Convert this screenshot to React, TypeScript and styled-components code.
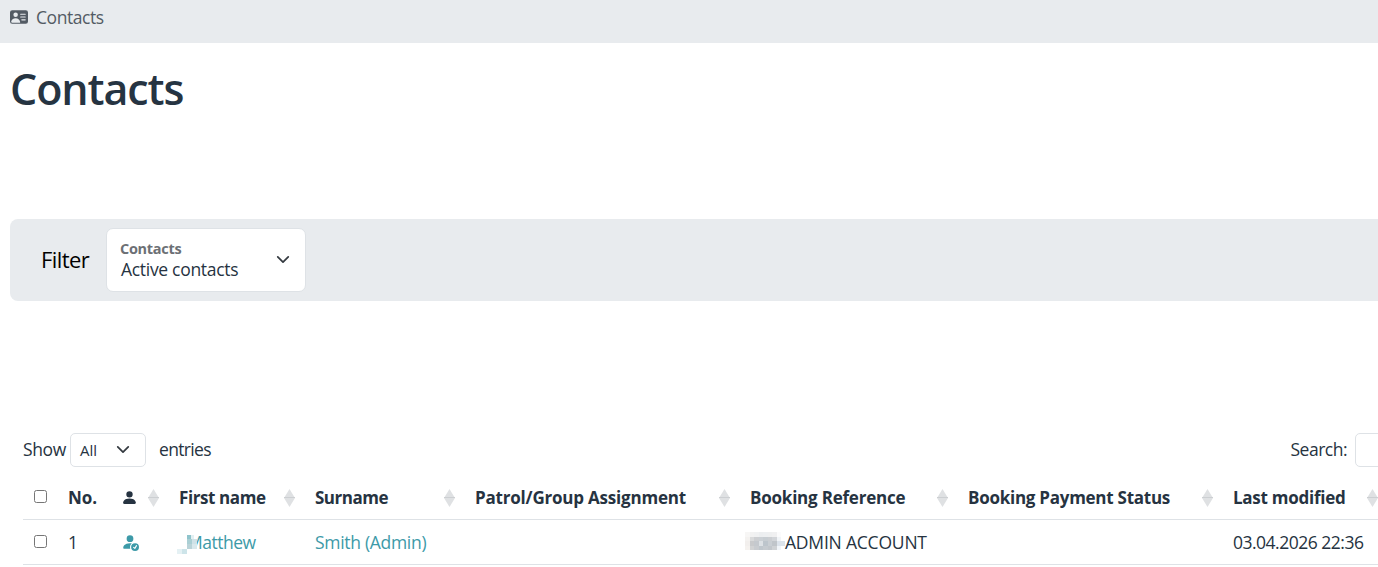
import { ReactNode } from "react";
import { BsPersonFill, BsPersonFillCheck, BsPersonVcardFill } from "react-icons/bs";
import styled, { createGlobalStyle } from "styled-components";

const columns = [
  { label: "First name", width: 136, tracking: -0.4 },
  { label: "Surname", width: 160, tracking: -0.5 },
  { label: "Patrol/Group Assignment", width: 275, tracking: -0.2 },
  { label: "Booking Reference", width: 218, tracking: -0.22 },
  { label: "Booking Payment Status", width: 265, tracking: -0.26 },
  { label: "Last modified", width: 165, tracking: -0.25 },
];

export default function App() {
  return (
    <>
      <GlobalStyle />
      <Page>
        <Breadcrumb>
          <BsPersonVcardFill size={18} />
          <Text $tracking={-0.45}>Contacts</Text>
        </Breadcrumb>
        <Title>Contacts</Title>
        <FilterBar>
          <FilterTitle>Filter</FilterTitle>
          <FilterSelect>
            <FilterText>
              <FilterLabel>Contacts</FilterLabel>
              <FilterValue>Active contacts</FilterValue>
            </FilterText>
            <IconChevron />
          </FilterSelect>
        </FilterBar>
        <Toolbar>
          <Text $tracking={-0.4}>Show</Text>
          <LengthSelect>
            <Text $tracking={0}>All</Text>
            <IconChevron />
          </LengthSelect>
          <Text $tracking={-0.65}>entries</Text>
          <Search>
            <Text $tracking={-0.5}>Search:</Text>
            <SearchInput aria-label="Search" />
          </Search>
        </Toolbar>
        <Table>
          <colgroup>
            <Col $width={36} />
            <Col $width={53} />
            <Col $width={58} />
            {columns.map(({ label, width }) => (
              <Col key={label} $width={width} />
            ))}
          </colgroup>
          <thead>
            <tr>
              <Heading>
                <CheckCell>
                  <Checkbox aria-label="Select all" />
                </CheckCell>
              </Heading>
              <Heading>
                <HeadingContent>
                  <Text $tracking={-0.1}>No.</Text>
                </HeadingContent>
              </Heading>
              <SortHeading>
                <BsPersonFill size={17} />
              </SortHeading>
              {columns.map(({ label, tracking }) => (
                <SortHeading key={label}>
                  <Text $tracking={tracking}>{label}</Text>
                </SortHeading>
              ))}
            </tr>
          </thead>
          <tbody>
            <tr>
              <Cell>
                <CheckCell>
                  <Checkbox aria-label="Select contact 1" />
                </CheckCell>
              </Cell>
              <Cell>1</Cell>
              <Cell>
                <IconLink href="#">
                  <BsPersonFillCheck size={18} />
                </IconLink>
              </Cell>
              <Cell>
                <NameLink href="#">
                  <Text $tracking={-0.5}>Matthew</Text>
                  <NameMask />
                </NameLink>
              </Cell>
              <Cell>
                <StyledLink href="#">
                  <Text $tracking={-0.3}>Smith (Admin)</Text>
                </StyledLink>
              </Cell>
              <Cell />
              <Cell>
                <Reference>
                  <ReferenceMask />
                  <Text $tracking={-0.2}>ADMIN ACCOUNT</Text>
                </Reference>
              </Cell>
              <Cell />
              <Cell>
                <Text $tracking={-0.5}>03.04.2026 22:36</Text>
              </Cell>
            </tr>
          </tbody>
        </Table>
      </Page>
    </>
  );
}

const SortHeading = ({ children }: { children: ReactNode }) => (
  <Heading>
    <HeadingContent>
      {children}
      <IconSort />
    </HeadingContent>
  </Heading>
);

const IconChevron = () => (
  <svg width="14" height="14" viewBox="0 0 16 16" fill="none">
    <path
      d="m2 4.5 6 6 6-6"
      stroke="#343a40"
      strokeWidth="2"
      strokeLinecap="round"
      strokeLinejoin="round"
    />
  </svg>
);

const IconSort = () => (
  <svg width="11" height="18" viewBox="0 0 11 18">
    <path d="M5.5 0 11 9 5.5 18 0 9Z" fill="#dfe1e3" />
    <path d="M0 8.5h11" stroke="#cccfd2" />
  </svg>
);

// Pixelated cover over the start of the first name
const NameMask = () => (
  <NameMaskSvg width="26" height="20" viewBox="0 0 26 20" shapeRendering="crispEdges">
    <path d="M8 0h10v15H8Z" fill="#fff" />
    <path d="M10 1h4v4h-4Z" fill="#8fc4cc" />
    <path d="M14 1h3v4h-3Z" fill="#e3f0f2" />
    <path d="M10 5h5v5h-5Z" fill="#aacfd4" />
    <path d="M15 5h5v5h-5Z" fill="#cfe2e7" />
    <path d="M10 10h5v5h-5Z" fill="#b9d3d8" />
    <path d="M15 10h5v5h-5Z" fill="#d8e8ec" />
    <path d="M0 15h5v5H0Z" fill="#e5f1f4" />
    <path d="M5 15h5v5H5Z" fill="#cde4e9" />
  </NameMaskSvg>
);

const maskRows = [
  ["#f7f6f5", "#f2f2f2", "#f0f1f2", "#eceef0", "#edeff1", "#eeeff0", "#f0f0f1", "#fbfbfc", "#fff"],
  ["#f4f2f0", "#d9dadb", "#cdcfd2", "#cbd0d5", "#c7cdd2", "#cbced2", "#d2d5d9", "#f1f4f7", "#fff"],
  ["#f2efed", "#c9cacc", "#c5c9ce", "#dde1e5", "#bdc5cc", "#c9ced3", "#c0c5ca", "#dce3eb", "#dce4ec"],
  ["#f5f2ef", "#d2d3d4", "#c9ccd0", "#c0c7cd", "#c6cbd0", "#c2c7cc", "#cfd2d5", "#f1f5f9", "#fff"],
];

const ReferenceMask = () => (
  <ReferenceMaskSvg width="40" height="18" viewBox="0 0 40 18" shapeRendering="crispEdges">
    {maskRows.map((row, y) =>
      row.map((fill, x) => (
        <rect key={`${x}-${y}`} x={x * 4.5} y={y * 4.5} width="4.5" height="4.5" fill={fill} />
      ))
    )}
  </ReferenceMaskSvg>
);

const GlobalStyle = createGlobalStyle`
  *, *::before, *::after {
    box-sizing: border-box;
  }

  body {
    margin: 0;
    overflow: hidden;
    background: #fff;
    color: #263341;
    font: 400 17.5px/26px "Open Sans", "Noto Sans", sans-serif;
  }

  svg {
    display: block;
    flex-shrink: 0;
  }
`;

const Page = styled.div`
  height: 567px;
  overflow: hidden;
`;

const Text = styled.span<{ $tracking: number }>`
  letter-spacing: ${({ $tracking }) => $tracking}px;
  white-space: nowrap;
`;

const Breadcrumb = styled.nav`
  display: flex;
  gap: 8px;
  align-items: center;
  height: 43px;
  padding: 0 10px 9px;
  background: #e8ebee;
  color: #535b64;
`;

const Title = styled.h1`
  margin: 16px 0 0 10px;
  font-size: 43px;
  font-weight: 600;
  line-height: 60px;
  letter-spacing: -1.1px;
  color: #263442;
`;

const FilterBar = styled.section`
  display: flex;
  gap: 17px;
  align-items: center;
  height: 82px;
  margin: 100px 0 0 10px;
  padding-left: 31px;
  border-radius: 8px 0 0 8px;
  background: #e8ebee;
`;

const FilterTitle = styled.span`
  width: 48px;
  padding-bottom: 2px;
  font-size: 22px;
  font-weight: 400;
  letter-spacing: -0.6px;
  color: #000;
`;

const FilterSelect = styled.div`
  display: flex;
  justify-content: space-between;
  align-items: center;
  width: 200px;
  height: 64px;
  padding: 0 15px 0 13px;
  border: 1px solid #dee2e6;
  border-radius: 7px;
  background: #fff;
`;

const FilterText = styled.div`
  display: flex;
  flex-direction: column;
  padding-bottom: 2px;
  line-height: 21px;
`;

const FilterLabel = styled.span`
  font-size: 14.5px;
  font-weight: 700;
  letter-spacing: -0.3px;
  color: #6c7075;
`;

const FilterValue = styled.span`
  padding-left: 1px;
  letter-spacing: -0.3px;
`;

const Toolbar = styled.div`
  display: flex;
  align-items: center;
  width: 1480px;
  height: 34px;
  margin: 132px 0 0 23px;

  > span,
  label > span {
    padding-bottom: 2px;
  }

  > span:first-child {
    width: 43px;
  }
`;

const LengthSelect = styled.div`
  display: flex;
  justify-content: space-between;
  align-items: center;
  width: 76px;
  height: 34px;
  margin: 0 13px 0 4px;
  padding: 0 15px 0 9px;
  border: 1px solid #dee2e6;
  border-radius: 5px;
  font-size: 15px;
`;

const Search = styled.label`
  display: flex;
  gap: 8px;
  align-items: center;
  margin-left: auto;
`;

const SearchInput = styled.input`
  width: 148px;
  height: 34px;
  border: 1px solid #dee2e6;
  border-radius: 5px;
`;

const Table = styled.table`
  width: 1366px;
  margin: 8px 0 0 23px;
  table-layout: fixed;
  border-collapse: separate;
  border-spacing: 0;
`;

const Col = styled.col<{ $width: number }>`
  width: ${({ $width }) => $width}px;
`;

const Heading = styled.th`
  height: 45px;
  padding: 1px 11px 0 9px;
  border-bottom: 1px solid #dee2e6;
  font-size: 17px;
  font-weight: 700;
  text-align: left;
`;

const HeadingContent = styled.div`
  display: flex;
  justify-content: space-between;
  align-items: center;
`;

const Cell = styled.td`
  height: 45px;
  padding: 0 9px;
  border-bottom: 1px solid #dee2e6;
`;

const CheckCell = styled.div`
  display: flex;
  padding: 0 0 2px 2px;
`;

const Checkbox = styled.input.attrs({ type: "checkbox" })`
  width: 13px;
  height: 13px;
  margin: 0;
`;

const StyledLink = styled.a`
  color: #3d9aa8;
  text-decoration: none;
`;

const IconLink = styled(StyledLink)`
  display: block;
`;

const NameLink = styled(StyledLink)`
  display: block;
  position: relative;
  padding-left: 8px;
`;

const NameMaskSvg = styled.svg`
  position: absolute;
  top: 5px;
  left: -2px;
`;

const Reference = styled.div`
  display: flex;
  align-items: center;
  margin-left: -5px;
`;

const ReferenceMaskSvg = styled.svg`
  margin-top: -2px;
`;
